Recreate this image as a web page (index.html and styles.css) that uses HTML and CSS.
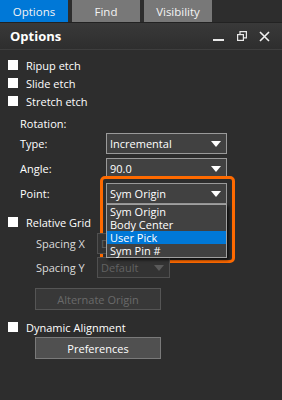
FILE: index.html
```html
<!DOCTYPE html>
<html>
<head>
<meta charset="utf-8">
<link rel="stylesheet" href="styles.css">
</head>
<body>
<div class="tabs">
  <div class="tab active">Options</div>
  <div class="tab">Find</div>
  <div class="tab">Visibility</div>
</div>
<div class="header">
  <div class="title">Options</div>
  <div class="win-icons">
    <svg width="12" height="12" viewBox="0 0 12 12"><rect x="0" y="9" width="11" height="2" fill="#e8e8e8"/></svg>
    <svg width="10" height="10" viewBox="0 0 10 10" fill="none" stroke="#e8e8e8" stroke-width="1.2"><rect x="0.6" y="3.6" width="5.8" height="5.8"/><path d="M3 3.6V0.6H9.4V6.8H6.4"/></svg>
    <svg width="11" height="11" viewBox="0 0 11 11" stroke="#f0f0f0" stroke-width="1.6"><path d="M1 1L10 10M10 1L1 10"/></svg>
  </div>
</div>
<div class="content">
  <div class="check-row"><span class="box"></span>Ripup etch</div>
  <div class="check-row"><span class="box"></span>Slide etch</div>
  <div class="check-row"><span class="box"></span>Stretch etch</div>
  <div class="section-label">Rotation:</div>
  <div class="field">
    <span class="label">Type:</span>
    <div class="combo">Incremental<span class="arrow"></span></div>
  </div>
  <div class="field">
    <span class="label">Angle:</span>
    <div class="combo">90.0<span class="arrow"></span></div>
  </div>
  <div class="field">
    <span class="label">Point:</span>
    <div class="combo point">Sym Origin<span class="arrow"></span>
      <div class="highlight"></div>
      <ul class="popup">
        <li>Sym Origin</li>
        <li>Body Center</li>
        <li class="selected">User Pick</li>
        <li>Sym Pin #</li>
      </ul>
    </div>
  </div>
  <div class="check-row grid-row"><span class="box"></span>Relative Grid</div>
  <div class="field sub">
    <span class="label">Spacing X</span>
    <div class="combo disabled">Default<span class="arrow"></span></div>
  </div>
  <div class="field sub">
    <span class="label">Spacing Y</span>
    <div class="combo disabled">Default<span class="arrow"></span></div>
  </div>
  <div class="button disabled-btn">Alternate Origin</div>
  <div class="check-row dyn-row"><span class="box"></span>Dynamic Alignment</div>
  <div class="button pref-btn">Preferences</div>
</div>
</body>
</html>
```

FILE: styles.css
```css
body {
  margin: 0;
  width: 282px;
  height: 400px;
  overflow: hidden;
  background: #2d2d2d;
  color: #ffffff;
  font-family: "Open Sans", "Noto Sans", sans-serif;
  font-size: 11px;
}

.tabs {
  display: flex;
  gap: 4px;
  height: 22px;
  border-bottom: 1px solid #222222;
  background: #2d2d2d;
}

.tab {
  width: 68px;
  display: flex;
  align-items: center;
  justify-content: center;
  background: #787878;
  color: #f4f4f4;
  font-size: 11.5px;
}

.tab.active {
  background: #0078d7;
}

.header {
  height: 26px;
  display: flex;
  align-items: center;
  justify-content: space-between;
  padding: 0 12px 0 10px;
  background: linear-gradient(#393939, #2e2e2e);
  border-bottom: 1px solid #3e3e3e;
}

.title {
  font-weight: bold;
  font-size: 13px;
  color: #ffffff;
}

.win-icons {
  display: flex;
  align-items: center;
  gap: 12px;
}

.content {
  position: relative;
  padding-top: 6px;
}

.check-row {
  height: 18px;
  display: flex;
  align-items: center;
  gap: 8px;
  padding-left: 8px;
}

.box {
  width: 10px;
  height: 10px;
  background: #ffffff;
}

.section-label {
  margin-top: 5px;
  height: 18px;
  line-height: 18px;
  padding-left: 20px;
}

.field {
  display: flex;
  align-items: center;
  height: 21px;
  padding-left: 20px;
  margin-bottom: 4px;
}

.field .label {
  width: 86px;
}

.combo {
  position: relative;
  box-sizing: border-box;
  width: 121px;
  height: 21px;
  line-height: 19px;
  padding-left: 3px;
  border: 1px solid #9a9a9a;
  background: #414141;
  color: #ffffff;
}

.arrow {
  position: absolute;
  right: 5px;
  top: 7px;
  width: 0;
  height: 0;
  border-left: 5px solid transparent;
  border-right: 5px solid transparent;
  border-top: 6px solid #ffffff;
}

.highlight {
  position: absolute;
  left: -7px;
  top: -8px;
  width: 129px;
  height: 81px;
  border: 3px solid #ff6a00;
  border-radius: 5px;
  pointer-events: none;
}

.popup {
  position: absolute;
  left: -1px;
  top: 20px;
  width: 121px;
  box-sizing: border-box;
  margin: 0;
  padding: 0;
  list-style: none;
  border: 1px solid #a0a0a0;
  background: #414141;
  box-shadow: 2px 2px 3px rgba(0, 0, 0, 0.7);
  z-index: 2;
}

.popup li {
  height: 13px;
  line-height: 13px;
  padding-left: 3px;
  color: #ffffff;
}

.popup li.selected {
  background: #0078d7;
}

.grid-row {
  margin-top: 9px;
  margin-bottom: 2px;
}

.field.sub {
  padding-left: 36px;
  margin-bottom: 3px;
}

.field.sub .label {
  width: 61px;
  color: #dcdcdc;
}

.combo.disabled {
  width: 73px;
  border-color: #505050;
  background: #333333;
  color: #626262;
}

.combo.disabled .arrow {
  border-top-color: #5a5a5a;
}

.button {
  box-sizing: border-box;
  width: 126px;
  height: 22px;
  margin-left: 35px;
  display: flex;
  align-items: center;
  justify-content: center;
}

.disabled-btn {
  margin-top: 10px;
  border: 1px solid #555555;
  background: #383838;
  color: #6a6a6a;
}

.dyn-row {
  margin-top: 8px;
}

.pref-btn {
  margin-top: 1px;
  border: 1px solid #7a7a7a;
  background: #505050;
  color: #ffffff;
}
```
